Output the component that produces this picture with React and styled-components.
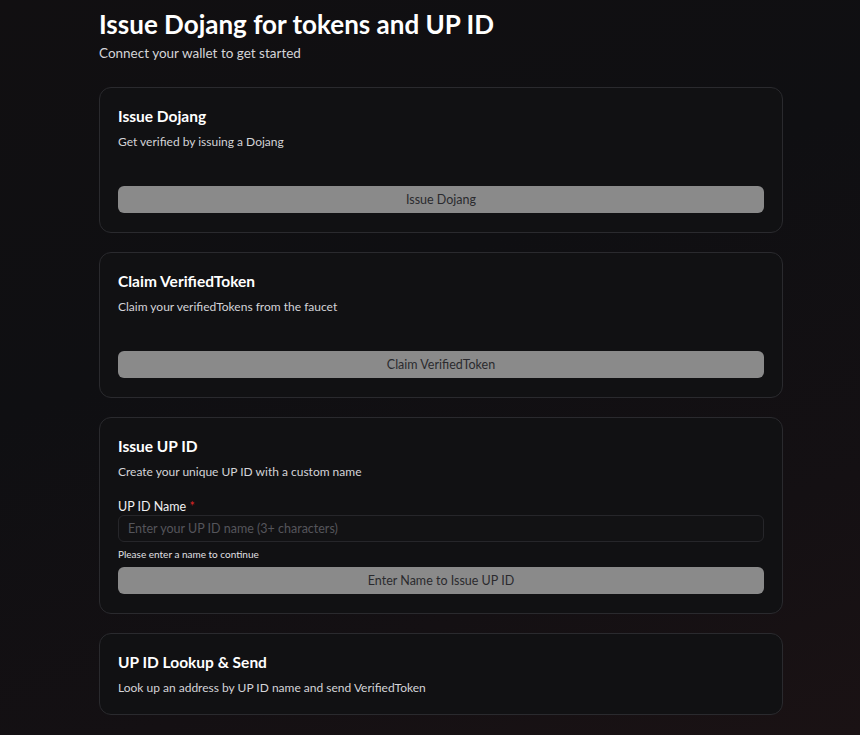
import styled, { createGlobalStyle } from 'styled-components';

const GlobalStyle = createGlobalStyle`
  html, body {
    margin: 0;
    padding: 0;
  }
  body {
    min-height: 735px;
    background: linear-gradient(160deg, #110f11 0%, #0f0f12 40%, #141013 75%, #1a1214 100%);
    font-family: Lato, "Noto Sans", sans-serif;
    color: #e6e6e8;
  }
`;

const Page = styled.main`
  width: 684px;
  padding: 6px 0 0 99px;
`;

const Heading = styled.h1`
  margin: 0;
  font-size: 26px;
  font-weight: 700;
  color: #ffffff;
  line-height: 36px;
`;

const Subheading = styled.p`
  margin: 3px 0 0;
  font-size: 13.5px;
  color: #d4d4d8;
`;

const CardList = styled.div`
  display: flex;
  flex-direction: column;
  gap: 19px;
  margin-top: 26px;
`;

const Card = styled.section`
  background: #111113;
  border: 1px solid #2a2a2e;
  border-radius: 12px;
  padding: 17px 18px ${p => (p.$compact ? 17 : 19)}px;
  display: flex;
  flex-direction: column;
`;

const CardTitle = styled.h2`
  margin: 0;
  font-size: 15.5px;
  font-weight: 700;
  color: #ffffff;
  line-height: 22px;
`;

const CardText = styled.p`
  margin: 6px 0 0;
  font-size: 12px;
  color: #d4d4d8;
  line-height: 18px;
`;

const Spacer = styled.div`
  height: ${p => p.h}px;
`;

const Button = styled.button`
  width: 100%;
  height: 27px;
  border: none;
  border-radius: 6px;
  background: #8a8a8a;
  color: #2a2a2e;
  font-family: inherit;
  font-size: 12.5px;
  cursor: not-allowed;
`;

const Label = styled.label`
  font-size: 12.5px;
  color: #f0f0f2;
  line-height: 16px;
`;

const Required = styled.span`
  color: #dc2626;
`;

const Input = styled.input`
  box-sizing: border-box;
  width: 100%;
  height: 27px;
  margin-top: 0;
  padding: 0 9px;
  background: #121214;
  border: 1px solid #26262a;
  border-radius: 6px;
  font-family: inherit;
  font-size: 12.5px;
  color: #e6e6e8;
  &::placeholder {
    color: #55555b;
  }
`;

const Hint = styled.p`
  margin: 6px 0 7px;
  font-size: 10px;
  color: #e0e0e4;
  line-height: 12px;
`;

export default function App() {
  return (
    <>
      <GlobalStyle />
      <Page>
        <Heading>Issue Dojang for tokens and UP ID</Heading>
        <Subheading>Connect your wallet to get started</Subheading>
        <CardList>
          <Card>
            <CardTitle>Issue Dojang</CardTitle>
            <CardText>Get verified by issuing a Dojang</CardText>
            <Spacer h={35} />
            <Button disabled>Issue Dojang</Button>
          </Card>
          <Card>
            <CardTitle>Claim VerifiedToken</CardTitle>
            <CardText>Claim your verifiedTokens from the faucet</CardText>
            <Spacer h={35} />
            <Button disabled>Claim VerifiedToken</Button>
          </Card>
          <Card>
            <CardTitle>Issue UP ID</CardTitle>
            <CardText>Create your unique UP ID with a custom name</CardText>
            <Spacer h={18} />
            <Label>
              UP ID Name <Required>*</Required>
            </Label>
            <Input placeholder="Enter your UP ID name (3+ characters)" />
            <Hint>Please enter a name to continue</Hint>
            <Button disabled>Enter Name to Issue UP ID</Button>
          </Card>
          <Card $compact>
            <CardTitle>UP ID Lookup &amp; Send</CardTitle>
            <CardText>Look up an address by UP ID name and send VerifiedToken</CardText>
          </Card>
        </CardList>
      </Page>
    </>
  );
}
